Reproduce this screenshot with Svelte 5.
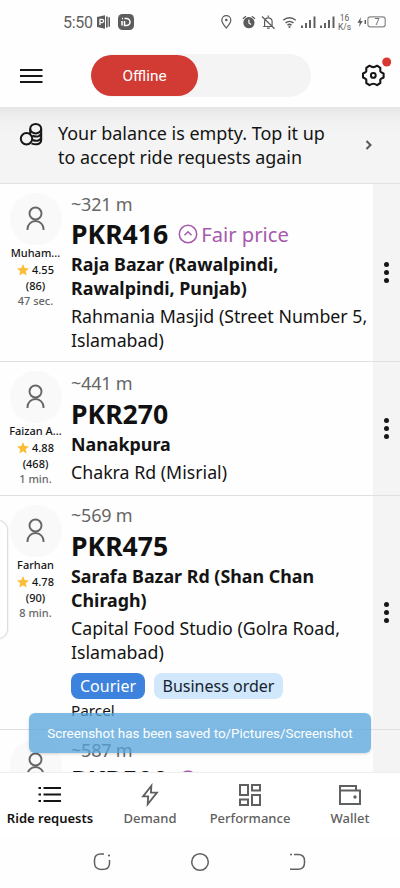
<script>
  const rides = [
    { name: 'Muham...', rating: '4.55', count: '(86)', ago: '47 sec.', distance: '~321 m', price: 'PKR416', fair: true,
      from: ['Raja Bazar (Rawalpindi,', 'Rawalpindi, Punjab)'], to: ['Rahmania Masjid (Street Number 5,', 'Islamabad)'], height: 178, top: 8 },
    { name: 'Faizan A...', rating: '4.88', count: '(468)', ago: '1 min.', distance: '~441 m', price: 'PKR270',
      from: ['Nanakpura'], to: ['Chakra Rd (Misrial)'], height: 134, top: 9 },
    { name: 'Farhan', rating: '4.78', count: '(90)', ago: '8 min.', distance: '~569 m', price: 'PKR475',
      from: ['Sarafa Bazar Rd (Shan Chan', 'Chiragh)'], to: ['Capital Food Studio (Golra Road,', 'Islamabad)'], courier: true, height: 234, top: 7 },
    { name: '', distance: '~587 m', price: 'PKR500', fair: true, from: [], to: [], height: 178, top: 8 }
  ];
</script>

<div class="screen">
  <div class="status">
    <span class="time">5:50</span>
    <svg class="ppt" width="14" height="14" viewBox="0 0 14 14"><path fill="#5d5d5d" d="M0 2 8 .2v13.6L0 12zM9 1.5h1.7v11H9zM11.5 2.2H13v9.6h-1.5z"/><path d="M3 10V4.4h2a1.5 1.5 0 0 1 0 3.2H3" fill="none" stroke="#fff" stroke-width="1.3"/></svg>
    <svg class="dapp" width="16" height="16" viewBox="0 0 16 16"><rect width="16" height="16" rx="4.5" fill="#5d5d5d"/><path d="M6.500 4.500h2a3.500 3.500 0 0 1 0 7h-2V7M4 7v4.500M4 4.500h1" fill="none" stroke="#fff" stroke-width="1.500"/></svg>
    <span class="grow"></span>
    <svg width="180" height="20" viewBox="220 12 180 20" fill="none" stroke="#5b5b5b" stroke-width="1.2">
      <path d="M226.3 28c-2.3-2.8-4.5-5.3-4.5-7.8a4.5 4.5 0 0 1 9 0c0 2.500-2.200 5-4.500 7.800z"/><circle cx="226.300" cy="20" r="1.300" fill="#5b5b5b" stroke="none"/>
      <circle cx="248.900" cy="22.700" r="5.600" fill="#5b5b5b" stroke="none"/><path d="m242.800 18.800 3.200-2.500m9 2.500-3.200-2.500"/><path d="M248.900 19.500v3.500l2.200 1.500" stroke="#fff"/>
      <path d="M263.200 26.500h9.500M264.600 26v-5a3.800 3.800 0 0 1 7.500 0v5M268.300 15.500v1.500M267 28.200h2.700M262 16.500l12.500 12.300"/>
      <path d="M283.300 20.300a9 9 0 0 1 12.400 0M285.500 23a6 6 0 0 1 8 0M287.500 25.300a3 3 0 0 1 4 0" stroke-width="1.500"/><circle cx="289.500" cy="27" r="1.100" fill="#5b5b5b" stroke="none"/>
      <path d="M302 28v-2.500m4 2.500v-5m4 5v-8m4.500 8V16.500M321 28v-2.500m4 2.500v-5m4 5v-8m4.500 8V16.500" stroke-width="1.900"/>
      <path d="m361 17-3.500 5.800h2.300L359 27l3.700-6h-2.300z" fill="#5b5b5b" stroke="none"/><path d="M365.300 20v4" stroke-width="1.500"/>
      <rect x="367.900" y="16.800" width="17.300" height="10" rx="2.300" stroke="#888"/>
      <g fill="#5b5b5b" stroke="none" font-family="Roboto, sans-serif" text-anchor="middle"><text x="344.500" y="20.800" font-size="8.500">16</text><text x="344.500" y="30" font-size="8.500">K/s</text><text x="377" y="25.200" font-size="9">7</text></g>
    </svg>
  </div>

  <header>
    <svg class="menu" width="23" height="16" viewBox="0 0 23 16"><path d="M0 2h22.500M0 8h22.500M0 14h22.500" stroke="#161616" stroke-width="2"/></svg>
    <div class="switch"><div class="offline">Offline</div></div>
    <span class="grow"></span>
    <svg class="gear" width="32" height="34" viewBox="360 55 32 34"><path transform="translate(373.300 75.400)" d="M10.300-2 10.300 2Q6.500 3.500 7 4.800L7 7.600 3.800 9.700Q1.500 8.300 0 8.300T-3.800 9.700L-7 7.600-7 4.800Q-6.500 3.500-10.300 2L-10.300-2Q-6.500-3.500-7-4.800L-7-7.600-3.800-9.700Q-1.500-8.300 0-8.300T3.800-9.700L7-7.600 7-4.800Q6.500-3.500 10.300-2z" fill="none" stroke="#151515" stroke-width="2.100" stroke-linejoin="round"/><circle cx="373.300" cy="75.400" r="2.400" fill="none" stroke="#151515" stroke-width="2"/><circle cx="386.700" cy="62" r="4.500" fill="#d93832"/></svg>
  </header>

  <div class="banner">
    <svg class="coins" width="24" height="24" viewBox="19 122 24 24" fill="none" stroke="#171717" stroke-width="2"><circle cx="26.500" cy="138.700" r="5.700"/><ellipse cx="35.700" cy="128.700" rx="5.500" ry="4.800"/><path d="M41.200 128.700v11.300c0 4-5 5.500-9.700 3.300M41.200 133c-.5 3.500-4.500 4.500-9 2.800M41.200 137.200c-.5 3.500-4.500 4.500-8.500 2.800M30.200 128.700v5.500"/></svg>
    <div class="bal"><div>Your balance is empty. Top it up</div><div>to accept ride requests again</div></div>
    <span class="grow"></span>
    <svg class="chev" width="8" height="12" viewBox="0 0 8 12"><path d="m1.500 2 4 4-4 4" fill="none" stroke="#575757" stroke-width="2"/></svg>
  </div>

  <main>
    {#each rides as r}
      <article style="height: {r.height}px">
        <div class="person">
          <div class="avatar"><svg width="20" height="26" viewBox="0 0 20 26" fill="none" stroke="#666" stroke-width="1.900"><circle cx="9.500" cy="7.500" r="6"/><path d="M1.500 24v-1a8 8 0 0 1 16 0v1"/></svg></div>
          {#if r.name}
            <div class="name">{r.name}</div>
            <div class="rating"><svg width="12" height="12" viewBox="0 0 12 12"><path fill="#fbbd35" d="m6 0 1.700 4 4.300.400-3.300 2.800 1 4.300L6 9.200l-3.700 2.300 1-4.300L0 4.400 4.300 4z"/></svg><span>{r.rating}</span></div>
            <div class="count">{r.count}</div>
            <div class="ago">{r.ago}</div>
          {/if}
        </div>
        <div class="info" style="padding-top: {r.top}px">
          <div class="distance">{r.distance}</div>
          <div class="price" class:raised={r.fair}><b>{r.price}</b>{#if r.fair}<svg width="20" height="20" viewBox="0 0 20 20" fill="none" stroke="#a65aad" stroke-width="1.500"><circle cx="10" cy="10" r="8.700"/><path d="m6.500 11.300 3.500-3.500 3.500 3.500"/></svg><span>Fair price</span>{/if}</div>
          <div class="from">{#each r.from as line}<div>{line}</div>{/each}</div>
          <div class="to">{#each r.to as line}<div>{line}</div>{/each}</div>
          {#if r.courier}
            <div class="tags"><span class="courier">Courier</span><span class="business">Business order</span></div>
            <div class="parcel">Parcel</div>
          {/if}
        </div>
        <div class="more"><i></i><i></i><i></i></div>
      </article>
    {/each}
  </main>

  <nav>
    <div class="tab active"><svg width="24" height="24" viewBox="0 0 24 24" stroke="#151515" stroke-width="2.200"><path d="M.500 5h2.500M.500 11.500H3M.500 18H3M5.500 5h17.500M5.500 11.500H23M5.500 18H23"/></svg><span>Ride requests</span></div>
    <div class="tab"><svg width="24" height="26" viewBox="0 0 24 26" fill="none" stroke="#606060" stroke-width="2"><path d="M13.500 3 4.500 14.500H10l-.500 8.500L19.500 10.500H13z"/></svg><span>Demand</span></div>
    <div class="tab"><svg width="24" height="24" viewBox="0 0 24 24" fill="none" stroke="#606060" stroke-width="2"><path d="M2 2h8v10H2zM14 2h8v5.500h-8zM2 16.500h8V22H2zM14 12h8v10h-8z"/></svg><span>Performance</span></div>
    <div class="tab"><svg width="24" height="24" viewBox="0 0 24 24" fill="none" stroke="#606060" stroke-width="2"><path d="M18 7.500V3H2v18h20V7.500H2"/><circle cx="17" cy="14" r="1.700" fill="#606060" stroke="none"/></svg><span>Wallet</span></div>
  </nav>

  <footer>
    <svg width="20" height="20" viewBox="0 0 20 20" fill="none" stroke="#606060" stroke-width="1.500"><path d="M12 2H9Q2.500 2 2.500 8v3q0 6.500 7.500 6.500t7.500-6V8"/><circle cx="17" cy="3.500" r="1.100" fill="#606060" stroke="none"/></svg>
    <svg width="20" height="20" viewBox="0 0 20 20" fill="none" stroke="#606060" stroke-width="1.500"><circle cx="10" cy="10" r="8.300"/></svg>
    <svg width="20" height="20" viewBox="0 0 20 20" fill="none" stroke="#606060" stroke-width="1.500"><path d="M6 2.500h4q6.500 0 6.500 6.300v2q0 6.500-6.500 6.500H2"/><circle cx="3" cy="2.500" r="1" fill="#606060" stroke="none"/></svg>
  </footer>

  <div class="edge"></div>
  <div class="toast">Screenshot has been saved to/Pictures/Screenshot</div>
</div>

<style>
  :global(body) { margin: 0; background: #fff; }
  .screen { position: relative; width: 400px; height: 888px; overflow: hidden; display: flex; flex-direction: column; background: #fefefe; font-family: "Noto Sans", sans-serif; color: #141414; white-space: nowrap; }
  .screen * { box-sizing: border-box; }
  svg { display: block; flex: none; }
  .grow { flex: 1; }
  .status { height: 44px; flex: none; display: flex; align-items: center; padding-left: 63px; }
  .time { font: 16px/20px Roboto, sans-serif; color: #606060; width: 34px; letter-spacing: -.3px; padding-top: 1px; }
  .dapp { margin-left: 7px; }
  header { height: 63px; flex: none; display: flex; align-items: center; padding: 0 8px 0 20px; }
  .switch { width: 220px; height: 43px; margin-left: 48px; border-radius: 22px; background: #f4f4f4; display: flex; align-items: center; }
  .offline { width: 107px; height: 41px; border-radius: 21px; background: #d13b34; color: #fff; text-align: center; font: 15.400px/43px Roboto, sans-serif; }
  .gear { margin-bottom: 7px; }
  .banner { height: 77px; flex: none; display: flex; background: linear-gradient(#e6e6e6, #f1f1f1 14px, #f4f4f4 30px); border-bottom: 1px solid #e2e2e2; padding: 14px 27px 0 19px; }
  .coins { margin-top: 1px; }
  .bal { margin-left: 15px; font-size: 17.950px; line-height: 24px; }
  .chev { margin-top: 18px; }
  main { height: 588px; flex: none; overflow: hidden; }
  article { display: flex; border-bottom: 1px solid #e0e0e0; }
  .person { width: 71px; flex: none; padding-top: 9px; display: flex; flex-direction: column; align-items: center; font-size: 11px; font-weight: 500; line-height: 16px; }
  .avatar { width: 52px; height: 52px; flex: none; border-radius: 50%; background: #f9f9f9; display: flex; align-items: center; justify-content: center; }
  .name { margin-top: -1px; line-height: 17px; }
  .rating { display: flex; align-items: center; gap: 3px; line-height: 17px; }
  .ago { margin-top: -1px; color: #666; line-height: 15px; }
  .info { flex: 1; min-width: 0; }
  .distance { height: 26px; font-size: 18px; line-height: 25px; letter-spacing: -.2px; color: #666; }
  .price { margin-top: 2px; height: 30px; display: flex; align-items: center; color: #a65aad; font-size: 20.200px; line-height: 30px; }
  .price.raised { margin: 1px 0 0; }
  .price b { color: #111; font-size: 26.600px; }
  .price svg { margin-left: 10px; margin-right: 3px; }
  .from { margin-top: 3px; font-size: 17.850px; font-weight: 700; line-height: 24px; }
  .to { margin-top: 4px; font-size: 17.750px; line-height: 24px; }
  .tags { display: flex; gap: 9px; margin-top: 9px; font-size: 16px; line-height: 26px; }
  .tags span { height: 26px; border-radius: 8px; text-align: center; }
  .courier { width: 74px; background: #3d82dd; color: #fff; }
  .business { width: 129px; background: #d0e7fc; color: #17232d; }
  .parcel { margin-top: 2px; font-size: 15.300px; line-height: 18px; }
  .more { width: 27px; flex: none; background: #f4f4f4; display: flex; flex-direction: column; justify-content: center; align-items: center; gap: 3px; }
  .more i { width: 5px; height: 5px; border-radius: 50%; background: #161616; }
  nav { height: 64px; flex: none; display: flex; border-top: 1px solid #eee; background: #fff; }
  .tab { width: 100px; display: flex; flex-direction: column; align-items: center; padding-top: 10px; font-size: 13px; line-height: 18px; font-weight: 500; color: #606060; }
  .tab svg { height: 24px; margin-bottom: 2px; }
  .active { color: #111; font-weight: 600; }
  footer { height: 52px; display: flex; justify-content: center; align-items: center; gap: 78px; }
  .edge { position: absolute; left: -12px; top: 520px; width: 20px; height: 119px; border: 1px solid #dedede; border-radius: 12px; background: #fff; box-shadow: 0 0 2px #ddd; }
  .toast { position: absolute; left: 29px; top: 713px; width: 342px; height: 40px; border-radius: 6px; background: rgba(86, 164, 220, .76); color: #fff; font: 13.400px/41px Roboto, sans-serif; text-align: center; box-shadow: 0 1px 3px rgba(0, 0, 0, .16); }
</style>
